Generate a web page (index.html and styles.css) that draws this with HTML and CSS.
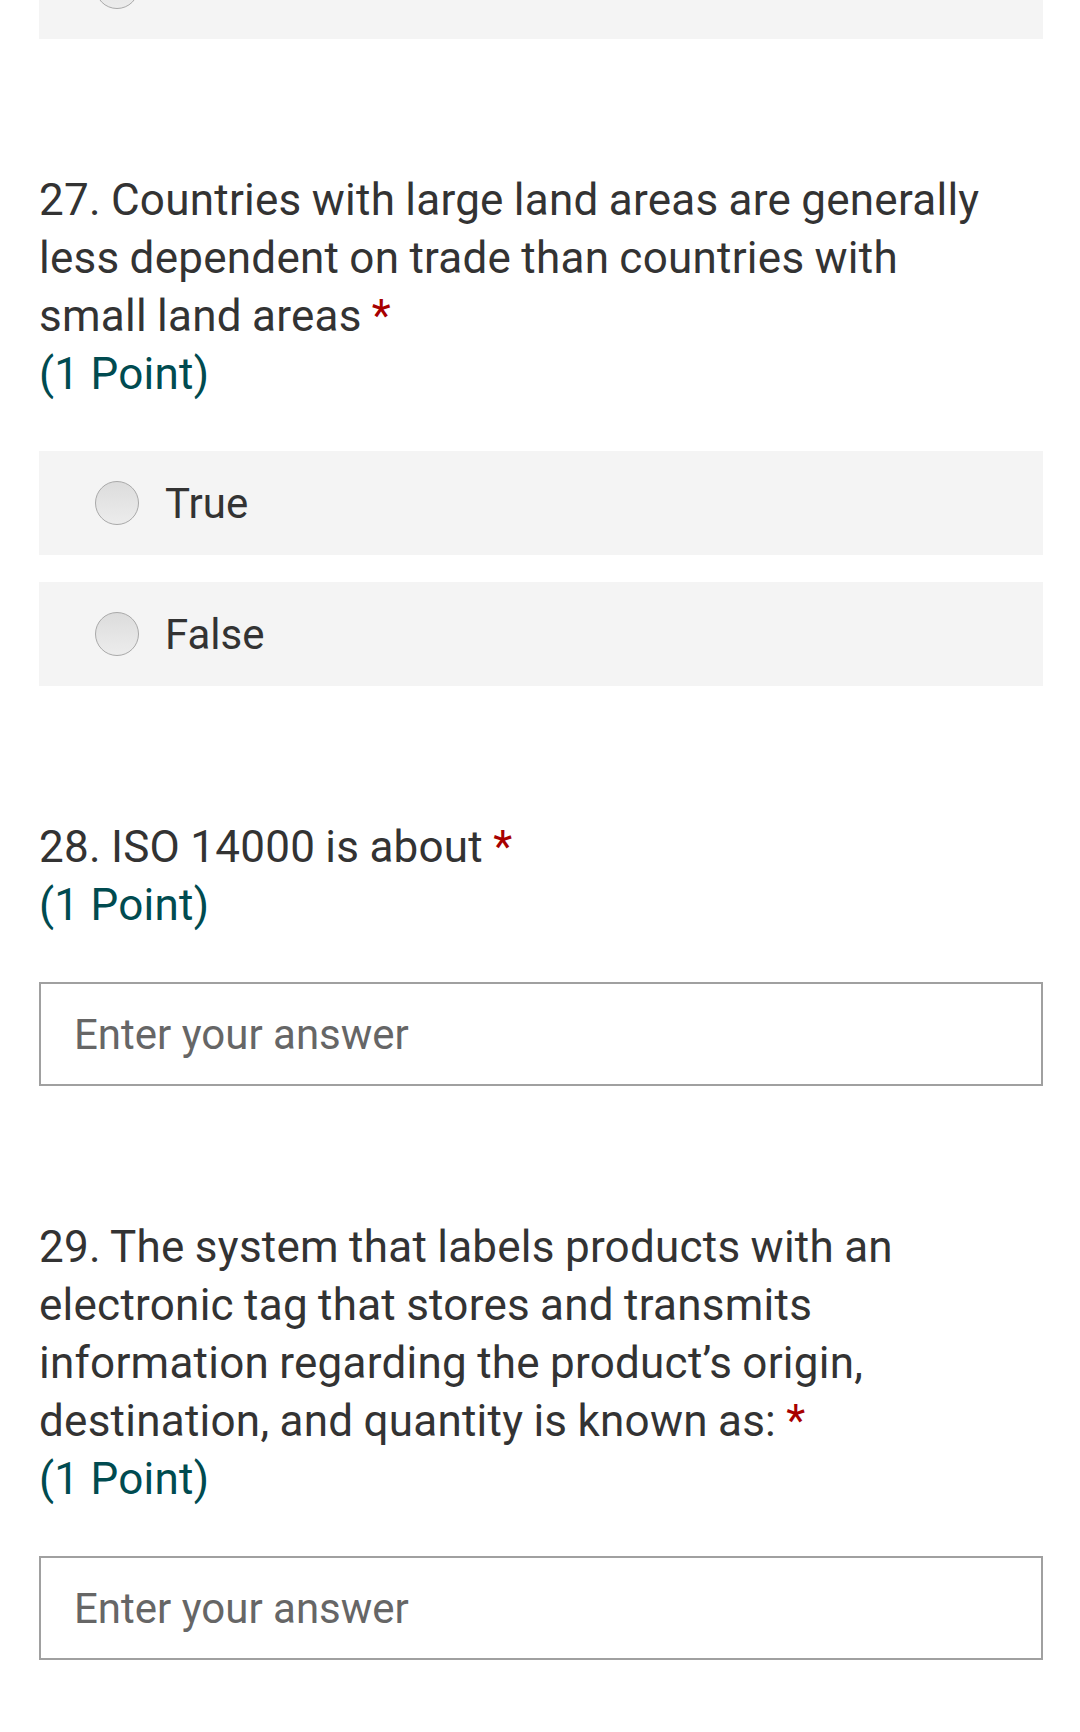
FILE: index.html
```html
<!DOCTYPE html>
<html lang="en">
<head>
<meta charset="utf-8">
<title>Form</title>
<link rel="stylesheet" href="styles.css">
</head>
<body>
<main class="page">
  <div class="option prev-option">
    <span class="radio"></span>
    <span class="option-label"></span>
  </div>

  <section class="question">
    <div class="q-title">
      <span class="q-num">27.</span> Countries with large land areas are generally less dependent on trade than countries with small land areas <span class="req">*</span>
      <span class="points">(1 Point)</span>
    </div>
    <div class="options">
      <label class="option"><span class="radio"></span><span class="option-label">True</span></label>
      <label class="option"><span class="radio"></span><span class="option-label">False</span></label>
    </div>
  </section>

  <section class="question">
    <div class="q-title">
      <span class="q-num">28.</span> ISO 14000 is about <span class="req">*</span>
      <span class="points">(1 Point)</span>
    </div>
    <input class="answer" type="text" placeholder="Enter your answer">
  </section>

  <section class="question">
    <div class="q-title">
      <span class="q-num">29.</span> The system that labels products with an electronic tag that stores and transmits information regarding the product’s origin, destination, and quantity is known as: <span class="req">*</span>
      <span class="points">(1 Point)</span>
    </div>
    <input class="answer" type="text" placeholder="Enter your answer">
  </section>
</main>
</body>
</html>
```

FILE: styles.css
```css
html, body {
  margin: 0;
  padding: 0;
  background: #ffffff;
}

body {
  font-family: Roboto, "Noto Sans", "Liberation Sans", sans-serif;
  color: #333333;
  overflow: hidden;
}

.page {
  padding: 0 37px 0 39px;
}

.prev-option {
  margin-top: -65px;
}

.question {
  margin-top: 132px;
}

.q-title {
  font-size: 44px;
  line-height: 58px;
  letter-spacing: 0.25px;
  word-spacing: -1px;
  color: #333333;
  padding-right: 44px;
}

.req {
  color: #a80000;
}

.points {
  display: block;
  color: #004b50;
  word-spacing: 0;
}

.options {
  margin-top: 48px;
  display: flex;
  flex-direction: column;
  gap: 27px;
}

.option {
  display: flex;
  align-items: center;
  height: 104px;
  box-sizing: border-box;
  padding-left: 56px;
  background: #f4f4f4;
}

.radio {
  width: 44px;
  height: 44px;
  box-sizing: border-box;
  border-radius: 50%;
  border: 1px solid #a9a9a9;
  background: linear-gradient(180deg, #dcdcdc 0%, #e6e6e6 60%, #ececec 100%);
  flex: none;
}

.option-label {
  margin-left: 26px;
  font-size: 42px;
  color: #333333;
}

.answer {
  display: block;
  margin: 48px 0 0 0;
  width: 100%;
  height: 104px;
  box-sizing: border-box;
  border: 2px solid #a0a0a0;
  border-radius: 0;
  padding: 0 0 0 33px;
  font-family: Roboto, "Noto Sans", "Liberation Sans", sans-serif;
  font-size: 42px;
  color: #333333;
  background: #ffffff;
  outline: none;
}

.answer::placeholder {
  color: #666666;
  opacity: 1;
}
```
